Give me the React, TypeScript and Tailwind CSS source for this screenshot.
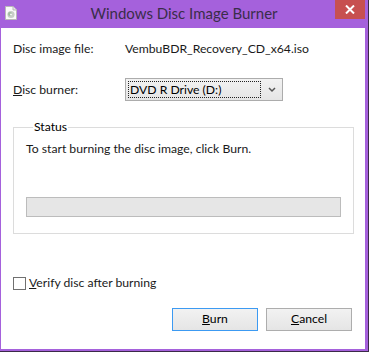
import React from 'react'

const font = { fontFamily: 'Lato, "Noto Sans", sans-serif' }

const DiscIcon: React.FC = () => (
  <svg width="12" height="14" viewBox="0 0 12 14">
    <path d="M0.5 0.5 H8 L11.5 4 V13.5 H0.5 Z" fill="#fafafa" stroke="#b9b9b9" />
    <path d="M8 0.5 V4 H11.5" fill="#e6e6e6" stroke="#b9b9b9" />
    <circle cx="6" cy="8.5" r="3.6" fill="#c8cdc8" />
    <circle cx="5" cy="8" r="2" fill="#8fb58f" opacity="0.7" />
    <circle cx="6" cy="8.5" r="1" fill="#fafafa" />
  </svg>
)

const App: React.FC = () => {
  return (
    <div className="w-[369px] h-[352px] bg-[#a561dc] border-r border-b border-[#3b2a48] flex flex-col" style={font}>
      {/* Title bar */}
      <div className="relative h-[28px] flex items-center justify-center shrink-0">
        <div className="absolute left-[5px] top-[6px]">
          <DiscIcon />
        </div>
        <span className="text-[15px] text-[#3a2d4a] leading-none -mt-[1px]">Windows Disc Image Burner</span>
        <div className="absolute right-[3px] top-0 w-[30px] h-[19px] bg-[#c75050] flex items-center justify-center">
          <svg width="10" height="9" viewBox="0 0 10 9">
            <path d="M1 0.5 L9 8.5 M9 0.5 L1 8.5" stroke="#fff" strokeWidth="2" />
          </svg>
        </div>
      </div>

      {/* Client area */}
      <div className="ml-[1px] mr-[3px] mb-[2px] flex-1 bg-white flex flex-col pl-[12px] pr-[13px] text-[12.2px] text-[#1a1a1a]">
        <div className="mt-[13px] h-4 flex items-center leading-4">
          <span className="w-[112px]">Disc image file:</span>
          <span>VembuBDR_Recovery_CD_x64.iso</span>
        </div>

        <div className="mt-[21px] flex items-center leading-4">
          <span className="w-[112px]"><u>D</u>isc burner:</span>
          <div className="w-[158px] h-[23px] border border-[#acacac] bg-gradient-to-b from-[#f2f2f2] to-[#e5e5e5] flex items-center pl-[2px] pr-[6px]">
            <div className="flex-1 h-[17px] border border-dotted border-[#222] flex items-center pl-[1px] text-black">
              DVD R Drive (D:)
            </div>
            <svg className="ml-[7px]" width="8" height="6" viewBox="0 0 8 6">
              <path d="M1 1 L4 4 L7 1" stroke="#555" strokeWidth="1.5" fill="none" />
            </svg>
          </div>
        </div>

        <fieldset className="mt-[18px] w-[340px] border border-[#dcdcdc] px-[12px] pb-[16px]">
          <legend className="ml-[7px] px-[1px] leading-4 text-black">Status</legend>
          <div className="mt-[6px] leading-4">To start burning the disc image, click Burn.</div>
          <div className="mt-[40px] w-[315px] h-[20px] border border-[#bcbcbc] bg-[#e6e6e6]" />
        </fieldset>

        <div className="mt-[41px] flex items-center gap-[3px] leading-4">
          <div className="w-[13px] h-[13px] border border-[#707070] bg-white" />
          <span><u>V</u>erify disc after burning</span>
        </div>

        <div className="mt-[17px] flex justify-end gap-[8px]">
          <button className="w-[86px] h-[23px] border border-[#3c9af2] bg-gradient-to-b from-[#f2f2f2] to-[#e5e5e5] text-black">
            <u>B</u>urn
          </button>
          <button className="w-[86px] h-[23px] border border-[#adadad] bg-gradient-to-b from-[#f2f2f2] to-[#e5e5e5] text-black">
            <u>C</u>ancel
          </button>
        </div>
      </div>
    </div>
  )
}

export default App
